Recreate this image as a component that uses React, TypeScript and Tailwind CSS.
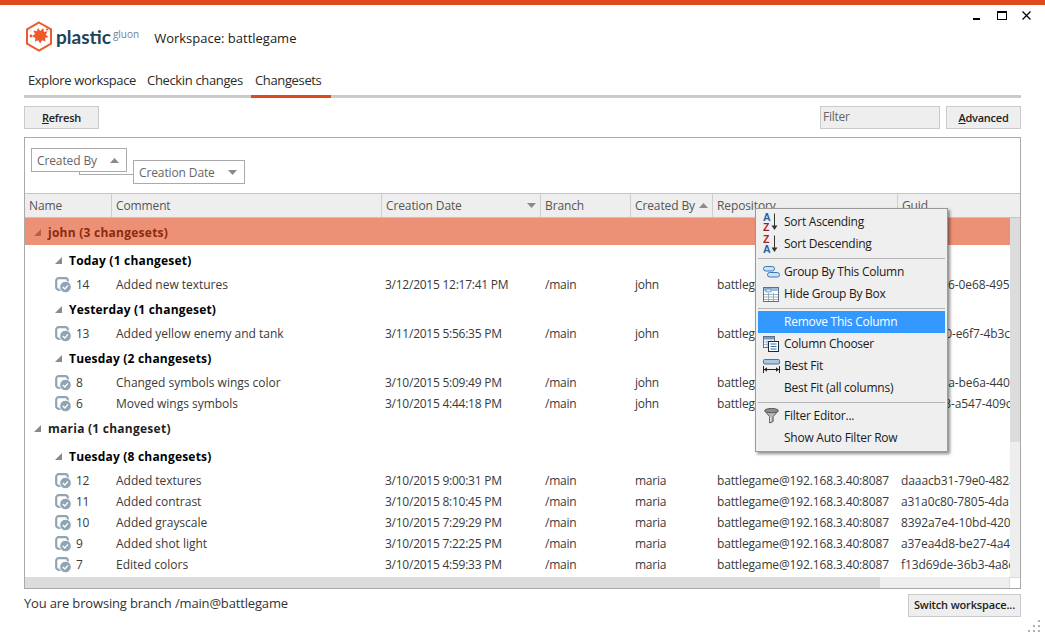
// App.tsx
import React from 'react';

const font = { fontFamily: '"Open Sans", "Noto Sans", sans-serif' };

const ChangesetIcon = () => (
  <svg width="17" height="16" viewBox="0 0 17 16" className="shrink-0">
    <rect x="1.2" y="1.2" width="11.6" height="11.6" rx="2.5" fill="none" stroke="#8fa5b4" strokeWidth="2.2" />
    <circle cx="10.5" cy="10" r="5.8" fill="#8fa5b4" stroke="#fff" strokeWidth="1" />
    <path d="M7.8 10l2 2 3.2-3.6" fill="none" stroke="#fff" strokeWidth="1.4" />
  </svg>
);

const Expander = ({ dark = false }: { dark?: boolean }) => (
  <svg width="7" height="7" viewBox="0 0 7 7" className="shrink-0">
    <path d="M7 0v7H0z" fill={dark ? '#b5604a' : '#8a8a8a'} />
  </svg>
);

const SortArrow = ({ up = false }: { up?: boolean }) => (
  <svg width="9" height="5" viewBox="0 0 9 5" className="shrink-0">
    <path d={up ? 'M4.500 0L9 5H0z' : 'M0 0h9L4.500 5z'} fill="#8a8a8a" />
  </svg>
);

const SortIcon = ({ first, second, firstColor, secondColor }: { first: string; second: string; firstColor: string; secondColor: string }) => (
  <svg width="16" height="18" viewBox="0 0 16 18">
    <text x="0" y="8" fontSize="10.5" fontWeight="700" fill={firstColor} fontFamily="Liberation Sans">{first}</text>
    <text x="0" y="17.500" fontSize="10.5" fontWeight="700" fill={secondColor} fontFamily="Liberation Sans">{second}</text>
    <path d="M11.500 0.500v13" stroke="#333" strokeWidth="1" />
    <path d="M8.500 12.500h6l-3 4.500z" fill="#333" />
  </svg>
);

const GroupIcon = () => (
  <svg width="17" height="12" viewBox="0 0 17 12">
    <rect x="0.5" y="0.5" width="11" height="4.5" rx="2.2" fill="#cfe0f3" stroke="#3d78b5" />
    <rect x="4.5" y="6.5" width="12" height="4.5" rx="2.2" fill="#cfe0f3" stroke="#3d78b5" />
  </svg>
);

const HideGroupIcon = () => (
  <svg width="16" height="15" viewBox="0 0 16 15">
    <rect x="0.5" y="0.5" width="15" height="14" fill="#fff" stroke="#5f6f80" />
    <rect x="1" y="1" width="14" height="3" fill="#9dbbdc" />
    <rect x="3" y="2" width="5" height="3" fill="#dbe7f3" stroke="#3d78b5" strokeWidth="0.6" />
    <path d="M1 7.500h14M1 10h14M1 12.500h14M5.500 6v8M10.500 6v8" stroke="#8aa0b5" strokeWidth="0.8" />
  </svg>
);

const ChooserIcon = () => (
  <svg width="16" height="16" viewBox="0 0 16 16">
    <rect x="0.5" y="0.5" width="11" height="11" fill="#fff" stroke="#5f6f80" />
    <rect x="1" y="1" width="10" height="2.5" fill="#6e9ed1" />
    <path d="M1 6h10M1 8.500h10M4 4v7M8 4v7" stroke="#8aa0b5" strokeWidth="0.7" />
    <rect x="5.5" y="5.5" width="10" height="10" fill="#fff" stroke="#1d2a38" />
    <path d="M7.500 8h6M7.500 10.500h6M7.500 13h6" stroke="#2f6fb0" strokeWidth="1.1" />
  </svg>
);

const BestFitIcon = () => (
  <svg width="17" height="14" viewBox="0 0 17 14">
    <rect x="0.5" y="0.5" width="16" height="4.5" rx="1" fill="#a8c6e6" stroke="#5f6f80" />
    <path d="M0.500 7v7M16.500 7v7M1 10.500h15" stroke="#222" strokeWidth="1" />
    <path d="M1 10.500l3-2.200v4.400zM16 10.500l-3-2.200v4.400z" fill="#222" />
  </svg>
);

const FunnelIcon = () => (
  <svg width="15" height="16" viewBox="0 0 15 16">
    <path d="M0.800 3l4.900 5.600V15l3.400-1.600V8.600L14.200 3" fill="#b9b9b9" stroke="#555" />
    <ellipse cx="7.5" cy="2.6" rx="6.8" ry="2.1" fill="#8f8f8f" stroke="#555" />
    <path d="M6.600 8.500v5.500" stroke="#e6e6e6" />
  </svg>
);

type Row =
  | { kind: 'user'; label: string; active?: boolean }
  | { kind: 'day'; label: string }
  | { kind: 'cs'; id: string; comment: string; date: string; user: string; guid: string };

const repo = 'battlegame@192.168.3.40:8087';

const rows: Row[] = [
  { kind: 'user', label: 'john (3 changesets)', active: true },
  { kind: 'day', label: 'Today (1 changeset)' },
  { kind: 'cs', id: '14', comment: 'Added new textures', date: '3/12/2015 12:17:41 PM', user: 'john', guid: 'c41d7ba6-0e68-4957' },
  { kind: 'day', label: 'Yesterday (1 changeset)' },
  { kind: 'cs', id: '13', comment: 'Added yellow enemy and tank', date: '3/11/2015 5:56:35 PM', user: 'john', guid: '5e2fa810-e6f7-4b3c' },
  { kind: 'day', label: 'Tuesday (2 changesets)' },
  { kind: 'cs', id: '8', comment: 'Changed symbols wings color', date: '3/10/2015 5:09:49 PM', user: 'john', guid: '9bd02c7a-be6a-4401' },
  { kind: 'cs', id: '6', comment: 'Moved wings symbols', date: '3/10/2015 4:44:18 PM', user: 'john', guid: '07ce61f3-a547-409c' },
  { kind: 'user', label: 'maria (1 changeset)' },
  { kind: 'day', label: 'Tuesday (8 changesets)' },
  { kind: 'cs', id: '12', comment: 'Added textures', date: '3/10/2015 9:00:31 PM', user: 'maria', guid: 'daaacb31-79e0-482a' },
  { kind: 'cs', id: '11', comment: 'Added contrast', date: '3/10/2015 8:10:45 PM', user: 'maria', guid: 'a31a0c80-7805-4da1' },
  { kind: 'cs', id: '10', comment: 'Added grayscale', date: '3/10/2015 7:29:29 PM', user: 'maria', guid: '8392a7e4-10bd-4200' },
  { kind: 'cs', id: '9', comment: 'Added shot light', date: '3/10/2015 7:22:25 PM', user: 'maria', guid: 'a37ea4d8-be27-4a43' },
  { kind: 'cs', id: '7', comment: 'Edited colors', date: '3/10/2015 4:59:33 PM', user: 'maria', guid: 'f13d69de-36b3-4a8e' },
  { kind: 'cs', id: '', comment: '', date: '', user: '', guid: '' },
];

const HeaderCell = ({ title, width, children }: { title: string; width: string; children?: React.ReactNode }) => (
  <div className={`${width} shrink-0 h-full border-r border-[#cfcfcf] flex items-center justify-between pl-1 pr-[4px] last:border-r-0 whitespace-nowrap tracking-[-0.12px]`}>
    <span className="text-[#555]">{title}</span>
    {children}
  </div>
);

const MenuItem = ({ icon, label, active = false }: { icon?: React.ReactNode; label: string; active?: boolean }) => (
  <div className={`h-[22px] flex items-center ${active ? 'bg-[#3399ff] text-white' : 'text-[#1a1a1a]'}`}>
    <div className="w-[26px] flex justify-center shrink-0">{icon}</div>
    <span className="text-[12px]">{label}</span>
  </div>
);

const MenuSep = () => <div className="h-px bg-[#b5b5b5] mt-[3px] mb-[2px]" />;

const ChangesetRow = ({ row }: { row: Extract<Row, { kind: 'cs' }> }) => (
  <div className="h-[21px] flex items-center text-[#3a3a3a] whitespace-nowrap">
    <div className="w-[87px] shrink-0 flex items-center pl-[30px] gap-[4px]">
      <ChangesetIcon />
      <span>{row.id}</span>
    </div>
    <div className="w-[270px] shrink-0 pl-[4px] tracking-[-0.02px]">{row.comment}</div>
    <div className="w-[159px] shrink-0 pl-[3px]">{row.date}</div>
    <div className="w-[90px] shrink-0 pl-[4px]">{row.id && '/main'}</div>
    <div className="w-[82px] shrink-0 pl-[4px]">{row.user}</div>
    <div className="w-[185px] shrink-0 pl-[4px] tracking-[-0.14px]">{row.id && repo}</div>
    <div className="w-[112px] shrink-0 pl-[3px] overflow-hidden tracking-[-0.1px]">{row.guid}</div>
  </div>
);

export default function App() {
  return (
    <div className="relative w-[1045px] h-[636px] bg-white overflow-hidden text-[12px] tracking-[-0.25px] flex flex-col" style={font}>
      <div className="h-[5px] bg-[#e0491b] shrink-0" />

      {/* window buttons */}
      <div className="absolute top-[11px] right-[14px] flex items-center">
        <div className="w-[7px] h-[2px] bg-black mt-[6px]" />
        <div className="ml-[17px] w-[10px] h-[9px] border border-black border-t-2" />
        <svg width="9" height="9" viewBox="0 0 9 9" className="ml-[15px]"><path d="M0.500 0.500l8 8M8.500 0.500l-8 8" stroke="#000" strokeWidth="1.2" /></svg>
      </div>

      <div className="h-[60px] shrink-0 flex items-center pl-[25px] pt-[2px]">
        <svg width="28" height="31" viewBox="0 0 28 31" className="shrink-0">
          <path d="M14 1.500l12 6.800v14.400l-12 6.800-12-6.800V8.300z" fill="none" stroke="#f0592a" strokeWidth="2" />
          <path d="M13 7l2.200 3 3-3 .8 4 3.500-.8-1.800 3.500 2.800 2-3.500 1.300.6 3.500-3.400-1.300-2.200 3.300-1.700-3.300-3.500 1.200.6-3.500-3.300-1.600 2.900-2.200-1.700-3.500 3.500.7z" fill="#f0592a" />
          <circle cx="6" cy="15" r="1.400" fill="#f0592a" />
          <circle cx="22" cy="8.500" r="1.100" fill="#f0592a" />
        </svg>
        <span className="ml-[3px] text-[19px] tracking-[0px] text-[#1e4257] leading-none font-bold" style={{ fontFamily: 'Lato, sans-serif' }}>plastic</span>
        <span className="ml-[2px] mb-[5px] text-[10px] tracking-normal text-[#6f8490] leading-none">gluon</span>
        <span className="ml-[15px] mt-[6px] text-[13px] tracking-[0px] text-[#1a1a1a]">Workspace: battlegame</span>
      </div>

      <div className="mx-[24px] h-[33px] shrink-0 flex border-b-[3px] border-[#cbcbcb] text-[13px] tracking-[-0.35px] text-[#2b2b2b]">
        <div className="pl-[4px] pr-[11px] pt-[6px]">Explore workspace</div>
        <div className="pr-[8px] pt-[6px]">Checkin changes</div>
        <div className="w-[80px] pl-[4px] pt-[6px] h-[33px] border-b-[3px] border-[#e0491b]">Changesets</div>
      </div>

      <div className="mx-[24px] mt-[8px] h-[23px] shrink-0 flex items-center">
        <div className="w-[75px] h-full border border-[#cbcbcb] bg-[#eeeeee] flex items-center justify-center pt-[1px] font-semibold text-[11px] text-[#222]">
          <span><span className="underline">R</span>efresh</span>
        </div>
        <div className="ml-auto w-[120px] h-full border border-[#cbcbcb] bg-[#eeeeee] flex items-center pl-[2px] pb-[2px] text-[#666]">Filter</div>
        <div className="ml-[6px] w-[75px] h-full border border-[#cbcbcb] bg-[#eeeeee] flex items-center justify-center pt-[1px] font-semibold text-[11px] text-[#222]">
          <span><span className="underline">A</span>dvanced</span>
        </div>
      </div>

      {/* grid */}
      <div className="relative mx-[24px] mt-[8px] h-[452px] shrink-0 border border-[#aaaaaa] flex flex-col overflow-hidden">
        <div className="relative h-[55px] shrink-0 tracking-[-0.12px]">
          <div className="absolute left-[54px] top-[29px] w-[55px] h-[8px] border-l border-b border-[#aaaaaa]" />
          <div className="absolute left-[6px] top-[10px] w-[96px] h-[24px] border border-[#aaaaaa] bg-white flex items-center justify-between pl-[5px] pr-[7px] pt-[1px] text-[#666]">
            <span>Created By</span>
            <SortArrow up />
          </div>
          <div className="absolute left-[108px] top-[22px] w-[112px] h-[24px] border border-[#aaaaaa] bg-white flex items-center justify-between pl-[5px] pr-[7px] pt-[1px] text-[#666]">
            <span>Creation Date</span>
            <SortArrow />
          </div>
        </div>

        <div className="h-[25px] shrink-0 flex bg-[#eeeeee] border-y border-[#c4c4c4]">
          <HeaderCell title="Name" width="w-[87px]" />
          <HeaderCell title="Comment" width="w-[270px]" />
          <HeaderCell title="Creation Date" width="w-[159px]"><SortArrow /></HeaderCell>
          <HeaderCell title="Branch" width="w-[90px]" />
          <HeaderCell title="Created By" width="w-[82px]"><SortArrow up /></HeaderCell>
          <HeaderCell title="Repository" width="w-[185px]" />
          <HeaderCell title="Guid" width="flex-1" />
        </div>

        <div className="flex flex-1 min-h-0">
          <div className="w-[985px] shrink-0 overflow-hidden">
            {rows.map((row, i) => {
              if (row.kind === 'user') {
                return (
                  <div key={i} className="h-[28px]">
                    <div className={`h-[27px] flex items-center gap-[7px] pl-[9px] pt-[2px] font-bold tracking-[0.25px] ${row.active ? 'bg-[#ec9176] text-[#8c2a0d]' : 'text-[#1f1f1f]'}`}>
                      <Expander dark={row.active} />
                      <span>{row.label}</span>
                    </div>
                  </div>
                );
              }
              if (row.kind === 'day') {
                return (
                  <div key={i} className="h-[28px] flex items-center gap-[7px] pl-[30px] pt-[1px] font-bold tracking-[0.2px] text-black">
                    <Expander />
                    <span>{row.label}</span>
                  </div>
                );
              }
              return <ChangesetRow key={i} row={row} />;
            })}
          </div>
          <div className="w-[11px] flex-1 bg-[#eeeeee] flex flex-col">
            <div className="h-[224px] bg-[#dcdcdc]" />
          </div>
        </div>

        <div className="absolute left-0 right-0 bottom-0 h-[11px] flex bg-[#eeeeee]">
          <div className="w-[855px] bg-[#dcdcdc]" />
          <div className="flex-1" />
          <div className="w-[11px] bg-white border-l border-t border-[#dcdcdc]" />
        </div>
      </div>

      <div className="mx-[24px] flex-1 flex items-start justify-between pt-[5px]">
        <span className="text-[13px] tracking-[-0.16px] text-[#333]">You are browsing branch /main@battlegame</span>
        <div className="w-[113px] h-[23px] border border-[#cbcbcb] bg-[#eeeeee] flex items-center justify-center font-semibold text-[11px] tracking-[-0.15px] text-[#222]">
          Switch workspace...
        </div>
      </div>

      {/* resize grip */}
      <svg width="14" height="14" viewBox="0 0 14 14" className="absolute right-[3px] bottom-[3px]">
        <path d="M10 1h2v2h-2zM5 6h2v2H5zM10 6h2v2h-2zM0 11h2v2H0zM5 11h2v2H5zM10 11h2v2h-2z" fill="#b0b0b0" />
      </svg>

      {/* column context menu */}
      <div className="absolute left-[755px] top-[208px] w-[193px] h-[244px] border border-[#9a9a9a] bg-[#efefef] px-[2px] py-[2px] shadow-[2px_2px_3px_rgba(0,0,0,0.45)]">
        <MenuItem label="Sort Ascending" icon={<SortIcon first="A" second="Z" firstColor="#2a5ea8" secondColor="#a3202a" />} />
        <MenuItem label="Sort Descending" icon={<SortIcon first="Z" second="A" firstColor="#a3202a" secondColor="#2a5ea8" />} />
        <MenuSep />
        <MenuItem label="Group By This Column" icon={<GroupIcon />} />
        <MenuItem label="Hide Group By Box" icon={<HideGroupIcon />} />
        <MenuSep />
        <MenuItem label="Remove This Column" active />
        <MenuItem label="Column Chooser" icon={<ChooserIcon />} />
        <MenuItem label="Best Fit" icon={<BestFitIcon />} />
        <MenuItem label="Best Fit (all columns)" />
        <MenuSep />
        <MenuItem label="Filter Editor..." icon={<FunnelIcon />} />
        <MenuItem label="Show Auto Filter Row" />
      </div>
    </div>
  );
}
